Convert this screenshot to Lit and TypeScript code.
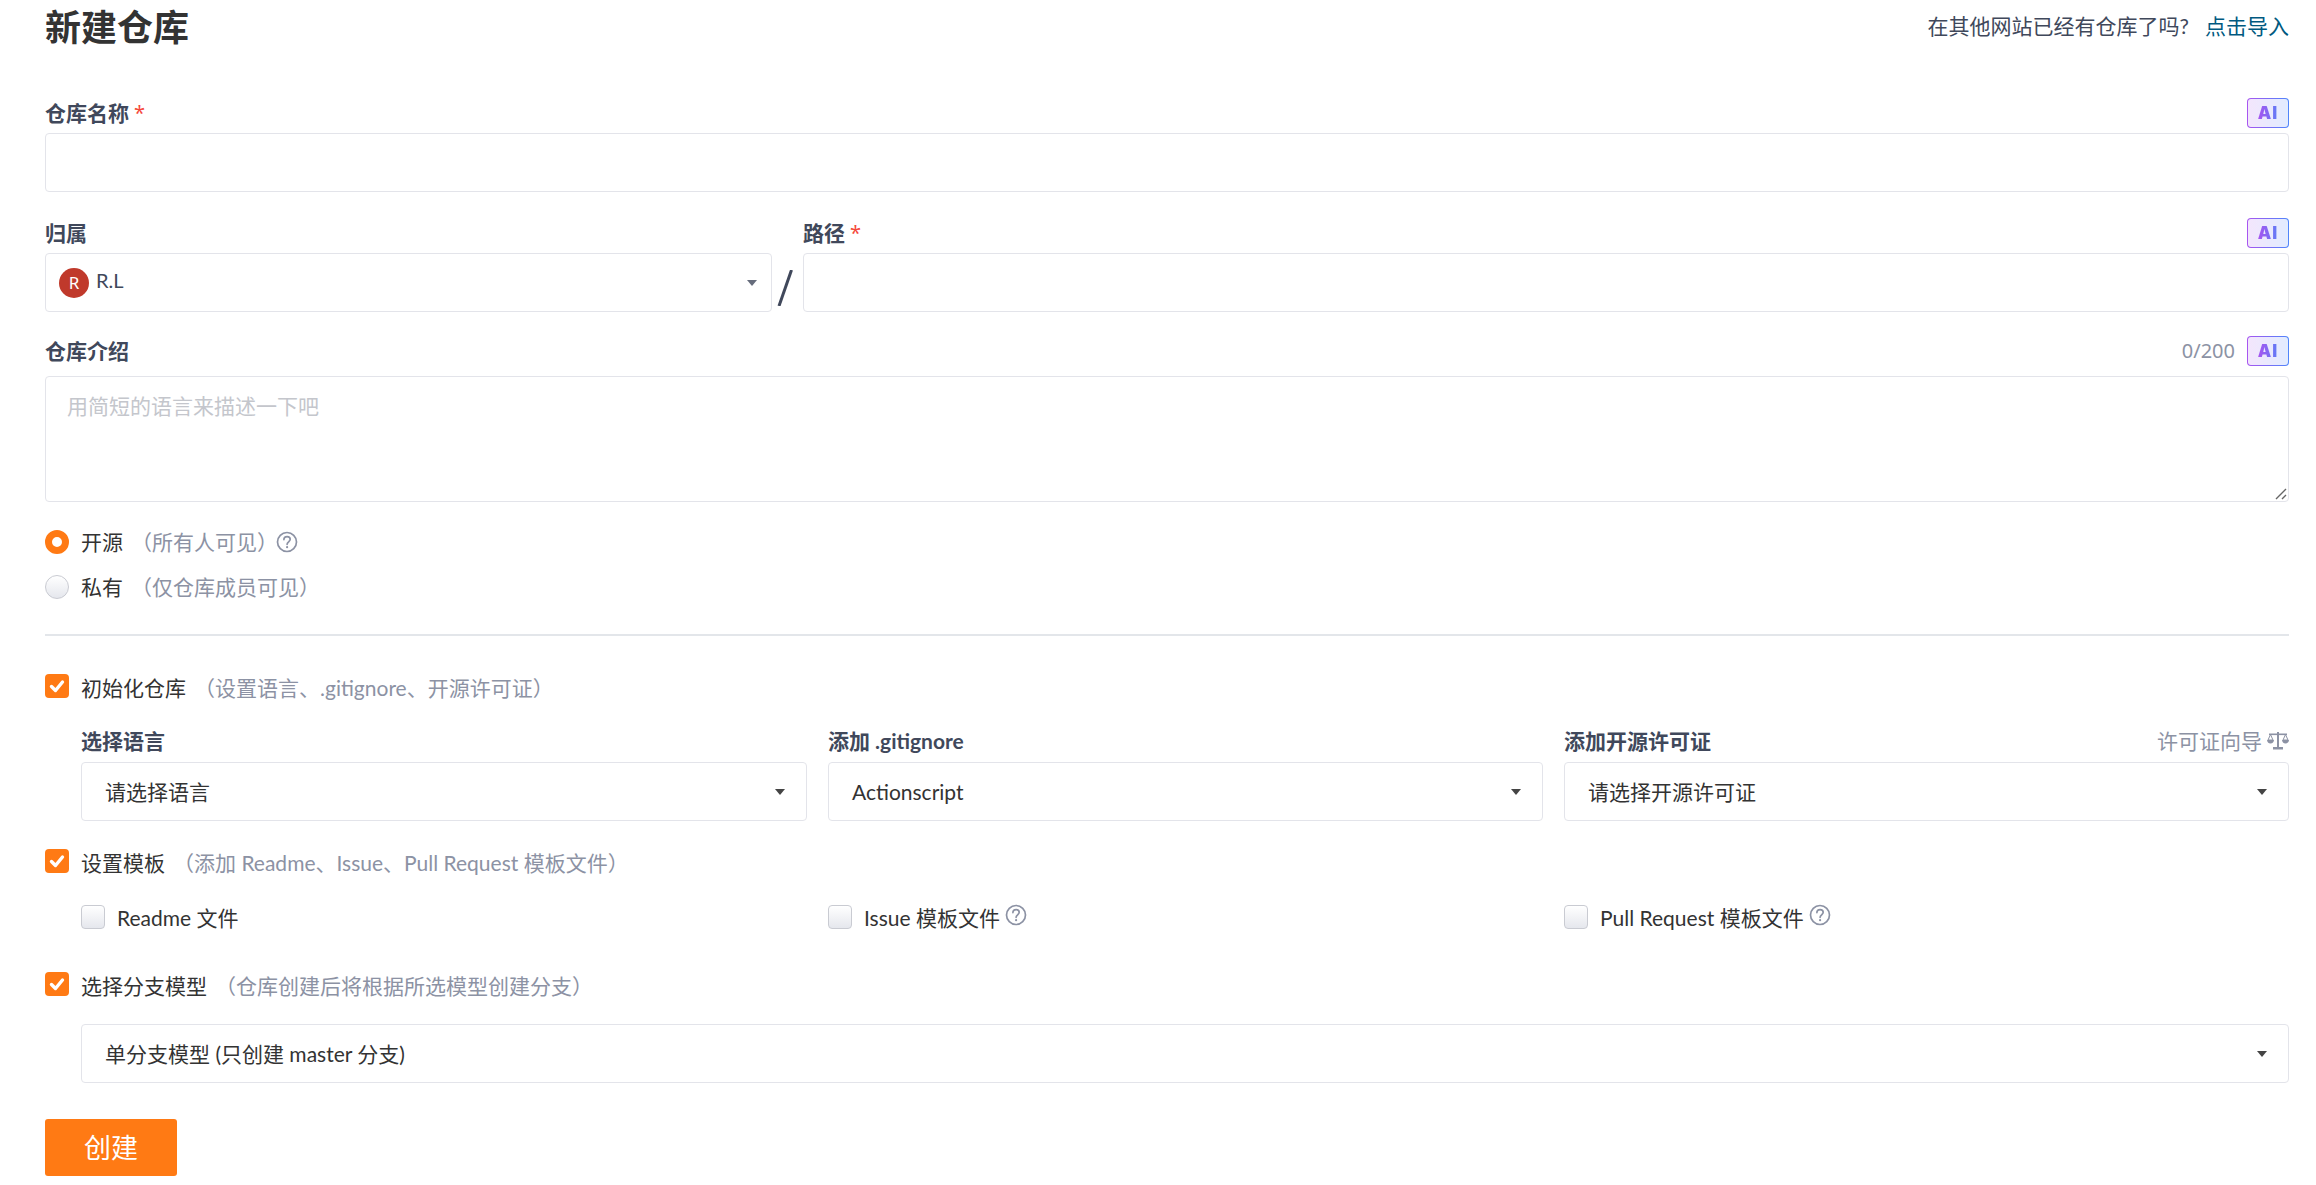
import { LitElement, html, css, svg } from "lit";
import { customElement } from "lit/decorators.js";

const helpIcon = html`<svg class="help" viewBox="0 0 22 22" fill="none" stroke="#8c92a4" stroke-width="1.7">
  <circle cx="11" cy="11" r="9.5"></circle>
  <path d="M7.9 8.6c0-1.9 1.4-3 3.2-3s3.1 1.1 3.1 2.7c0 2.4-3.1 2.6-3.1 5" stroke-linecap="round"></path>
  <circle cx="11.1" cy="16.2" r="1.1" fill="#8c92a4" stroke="none"></circle>
</svg>`;

const check = svg`<path d="M6.5 12.5l4 4 7-8.5" fill="none" stroke="#fff" stroke-width="3.4" stroke-linecap="round" stroke-linejoin="round"></path>`;

@customElement("app-root")
export class AppRoot extends LitElement {
  static styles = css`
    :host {
      display: block;
      box-sizing: border-box;
      width: 2316px;
      height: 1185px;
      overflow: hidden;
      padding: 0 27px 0 45px;
      background: #fff;
      color: #40485b;
      font-family: "Lato", "Noto Sans CJK SC", sans-serif;
      font-size: 21px;
      line-height: 30px;
    }
    * { box-sizing: border-box; }
    .head {
      display: flex;
      justify-content: space-between;
      height: 98px;
    }
    h1 {
      margin: 3px 0 0;
      font-size: 36px;
      line-height: 48px;
      font-weight: 700;
      color: #333;
    }
    .import { margin-top: 11px; color: #40485b; }
    .import a { color: #005980; margin-left: 16px; text-decoration: none; }
    .label-row {
      display: flex;
      justify-content: space-between;
      align-items: center;
      height: 30px;
      margin-bottom: 5px;
    }
    .label { font-weight: 700; color: #40485b; line-height: 28px; }
    .star {
      color: #f5483b;
      font-weight: 400;
      font-family: "Noto Sans", sans-serif;
      font-size: 20px;
      line-height: 20px;
      vertical-align: 1px;
    }
    .box {
      display: flex;
      align-items: center;
      height: 59px;
      border: 1.5px solid #e3e4ea;
      border-radius: 4px;
      background: #fff;
    }
    .ai {
      display: flex;
      align-items: center;
      justify-content: center;
      width: 42px;
      height: 30px;
      border: 1.5px solid transparent;
      border-radius: 4px;
      background: linear-gradient(90deg, #f3e6fc, #e2ecff) padding-box,
        linear-gradient(90deg, #a855f0, #4f86fb) border-box;
    }
    .ai span {
      font-family: "Inter", sans-serif;
      font-weight: 900;
      font-size: 17px;
      line-height: 20px;
      letter-spacing: 1px;
      background: linear-gradient(90deg, #a855f0, #5f7cf6);
      -webkit-background-clip: text;
      background-clip: text;
      color: transparent;
    }
    .owner-row { display: flex; margin-top: 26px; }
    .owner { width: 727px; flex: none; }
    .slash {
      width: 31px;
      flex: none;
      display: flex;
      justify-content: center;
      padding: 52px 6px 0 0;
    }
    .path { flex: 1; }
    .owner-box { padding: 0 14px 0 13px; }
    .avatar {
      width: 30px;
      height: 30px;
      border-radius: 50%;
      background: #c0392b;
      color: #fff;
      font-family: "Noto Sans", sans-serif;
      font-size: 17px;
      line-height: 30px;
      text-align: center;
      margin-right: 7px;
      flex: none;
    }
    .owner-name {
      font-size: 20px;
      color: #40485b;
      margin-top: -6px;
      flex: 1;
    }
    .caret {
      width: 0;
      height: 0;
      border-left: 5.5px solid transparent;
      border-right: 5.5px solid transparent;
      border-top: 6px solid #666c7c;
      flex: none;
    }
    .intro { margin-top: 24px; }
    .right {
      display: flex;
      align-items: center;
      gap: 12px;
      color: #8c92a4;
      font-family: "Noto Sans", sans-serif;
      font-size: 20px;
    }
    .textarea {
      height: 126px;
      margin-top: 10px;
      padding: 14px 21px;
      border: 1.5px solid #e3e4ea;
      border-radius: 4px;
      color: #c4c6cc;
      position: relative;
    }
    .grip { position: absolute; right: 1px; bottom: 1px; width: 12px; height: 12px; }
    .choice {
      display: flex;
      align-items: center;
      height: 24px;
    }
    .choice .text { margin-left: 12px; color: #333; white-space: pre; }
    .desc { color: #8c92a4; margin-left: 8px; white-space: pre; }
    .chk .text, .chk .desc { margin-top: 3px; }
    .radio {
      width: 24px;
      height: 24px;
      border-radius: 50%;
      flex: none;
      background: linear-gradient(#fff, #e5e7ed);
      border: 1.5px solid #c9cbd2;
    }
    .radio.on {
      background: #fff;
      border: 7px solid #ff7a14;
    }
    .radios { margin-top: 28px; display: flex; flex-direction: column; gap: 21px; }
    .help { width: 22px; height: 22px; margin-left: -2px; flex: none; }
    hr {
      height: 2px;
      border: 0;
      background: #e3e6ea;
      margin: 35px 0 38px;
    }
    .cb {
      width: 24px;
      height: 24px;
      border-radius: 4px;
      flex: none;
      background: linear-gradient(#fff, #e5e7ed);
      border: 1.5px solid #c9cbd2;
    }
    svg.cb.on { background: #ff7a14; border: 0; }
    .cols {
      display: grid;
      grid-template-columns: 726px 715px 725px;
      column-gap: 21px;
      margin-left: 36px;
    }
    .cols .label-row { margin-bottom: 6px; }
    .sel { height: 59px; padding: 0 21px 0 23px; color: #333; justify-content: space-between; }
    .sel .caret { border-top-color: #444; }
    .guide { display: flex; align-items: center; color: #8c92a4; font-weight: 400; gap: 5px; }
    .guide svg { width: 22px; height: 22px; }
    .opts { margin-top: 28px; }
    .tpl { margin-top: 32px; }
    .tpl .choice .help { margin-left: 5px; margin-top: -4px; }
    .tpl .chk .text { margin-top: 1px; }
    .branch { margin-top: 43px; }
    .sel-wide { margin: 28px 0 0 36px; }
    button {
      display: block;
      width: 132px;
      height: 57px;
      margin-top: 36px;
      border: 0;
      border-radius: 3px;
      background: #ff7a14;
      color: #fff;
      font: inherit;
      font-size: 27px;
      padding: 0;
    }
    .cols-wrap { margin-top: 28px; }
  `;

  private ai() {
    return html`<div class="ai"><span>AI</span></div>`;
  }

  private cb(on: boolean) {
    return html`<svg class="cb ${on ? "on" : ""}" viewBox="0 0 24 24">${on ? check : ""}</svg>`;
  }

  render() {
    return html`
      <div class="head">
        <h1>新建仓库</h1>
        <div class="import">在其他网站已经有仓库了吗?<a>点击导入</a></div>
      </div>

      <div class="label-row">
        <span class="label">仓库名称 <span class="star">*</span></span>
        ${this.ai()}
      </div>
      <div class="box"></div>

      <div class="owner-row">
        <div class="owner">
          <div class="label-row"><span class="label">归属</span></div>
          <div class="box owner-box">
            <div class="avatar">R</div>
            <div class="owner-name">R.L</div>
            <div class="caret"></div>
          </div>
        </div>
        <div class="slash">
          <svg width="16" height="36" viewBox="0 0 16 36"><path d="M14.5 0L2 36" stroke="#40485b" stroke-width="3"></path></svg>
        </div>
        <div class="path">
          <div class="label-row">
            <span class="label">路径 <span class="star">*</span></span>
            ${this.ai()}
          </div>
          <div class="box"></div>
        </div>
      </div>

      <div class="intro">
        <div class="label-row">
          <span class="label">仓库介绍</span>
          <div class="right">0/200 ${this.ai()}</div>
        </div>
        <div class="textarea">
          用简短的语言来描述一下吧
          <svg class="grip" viewBox="0 0 12 12" stroke="#666" stroke-width="1.4"><path d="M1 11L11 1M7 11l4-4"></path></svg>
        </div>
      </div>

      <div class="radios">
        <div class="choice">
          <div class="radio on"></div><span class="text">开源</span><span class="desc">（所有人可见）</span>${helpIcon}
        </div>
        <div class="choice">
          <div class="radio"></div><span class="text">私有</span><span class="desc">（仅仓库成员可见）</span>
        </div>
      </div>

      <hr />

      <div class="choice chk">
        ${this.cb(true)}<span class="text">初始化仓库</span><span class="desc">（设置语言、.gitignore、开源许可证）</span>
      </div>

      <div class="cols cols-wrap">
        <div>
          <div class="label-row"><span class="label">选择语言</span></div>
          <div class="box sel"><span>请选择语言</span><div class="caret"></div></div>
        </div>
        <div>
          <div class="label-row"><span class="label">添加 .gitignore</span></div>
          <div class="box sel"><span>Actionscript</span><div class="caret"></div></div>
        </div>
        <div>
          <div class="label-row">
            <span class="label">添加开源许可证</span>
            <span class="guide">许可证向导
              <svg viewBox="0 0 22 22" fill="#8c92a4">
                <path d="M10 2h2v15h4v2.5H6V17h4z"></path>
                <path d="M2 3.5h18v1.6H2z"></path>
                <path d="M3.5 4.5L1 10h5zM18.5 4.5L16 10h5z" fill="none" stroke="#8c92a4" stroke-width="1"></path>
                <path d="M0 10h7c0 2-1.5 3.4-3.5 3.4S0 12 0 10zM15 10h7c0 2-1.5 3.4-3.5 3.4S15 12 15 10z"></path>
              </svg>
            </span>
          </div>
          <div class="box sel"><span>请选择开源许可证</span><div class="caret"></div></div>
        </div>
      </div>

      <div class="opts choice chk">
        ${this.cb(true)}<span class="text">设置模板</span><span class="desc">（添加 Readme、Issue、Pull Request 模板文件）</span>
      </div>

      <div class="cols tpl">
        <div class="choice chk">${this.cb(false)}<span class="text">Readme 文件</span></div>
        <div class="choice chk">${this.cb(false)}<span class="text">Issue 模板文件</span>${helpIcon}</div>
        <div class="choice chk">${this.cb(false)}<span class="text">Pull Request 模板文件</span>${helpIcon}</div>
      </div>

      <div class="branch choice chk">
        ${this.cb(true)}<span class="text">选择分支模型</span><span class="desc">（仓库创建后将根据所选模型创建分支）</span>
      </div>

      <div class="box sel sel-wide"><span>单分支模型 (只创建 master 分支)</span><div class="caret"></div></div>

      <button>创建</button>
    `;
  }
}
